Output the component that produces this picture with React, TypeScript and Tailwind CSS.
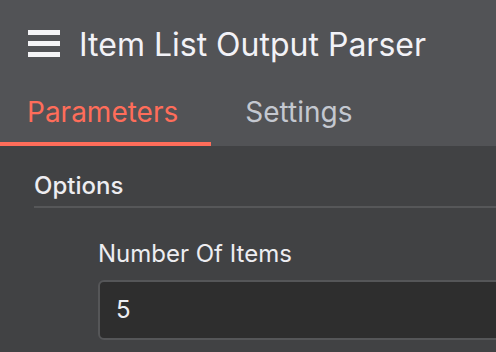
import React from "react";

export default function App() {
  return (
    <div
      className="w-[496px] h-[352px] overflow-hidden bg-[#414244] flex flex-col"
      style={{ fontFamily: "Inter, 'Noto Sans', sans-serif" }}
    >
      <div className="bg-[#525356] flex flex-col shrink-0">
        <div className="h-[88px] flex items-center pl-[28px]">
          <svg width="32" height="28" viewBox="0 0 32 28" className="shrink-0">
            <rect x="0" y="0" width="32" height="5" fill="#f4f4f6" />
            <rect x="0" y="11" width="32" height="5" fill="#f4f4f6" />
            <rect x="0" y="22" width="32" height="5" fill="#f4f4f6" />
          </svg>
          <div className="ml-[19px] mt-[1px] text-[32px] leading-none text-[#f2f2f7] whitespace-nowrap">
            Item List Output Parser
          </div>
        </div>
        <div className="flex h-[58px]">
          <div className="pl-[27px] pr-[33px] pt-[10px] border-b-4 border-[#ff6d5a] text-[28px] leading-[28px] text-[#ff6d5a] whitespace-nowrap">
            Parameters
          </div>
          <div className="pl-[34px] pt-[10px] text-[28px] leading-[28px] text-[#c4c8d0] whitespace-nowrap">
            Settings
          </div>
        </div>
      </div>
      <div className="flex flex-col pl-[34px] pt-[28px]">
        <div className="text-[24px] leading-[24px] font-medium text-[#ededf1] whitespace-nowrap">
          Options
        </div>
        <div className="mt-[8px] h-[2px] bg-[#565759]" />
        <div className="pl-[64px] pt-[34px] flex flex-col">
          <div className="text-[24px] leading-[24px] text-[#ededf1] whitespace-nowrap">
            Number Of Items
          </div>
          <div className="mt-[14px] h-[60px] w-[440px] rounded-[6px] border-2 border-[#555658] bg-[#2e2e2e] flex items-center pl-[16px] text-[24px] text-[#ededf1]">
            5
          </div>
        </div>
      </div>
    </div>
  );
}
